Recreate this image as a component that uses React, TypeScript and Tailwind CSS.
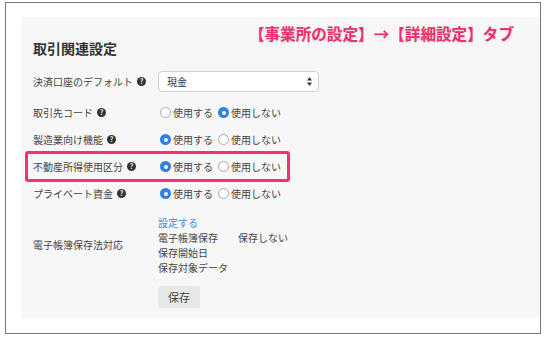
import React from "react";

const font = { fontFamily: '"Noto Sans CJK JP", "Noto Sans", sans-serif' };

function Help() {
  return (
    <span className="ml-[4px] inline-flex h-[9px] w-[9px] items-center justify-center rounded-full bg-[#333] text-[7px] font-bold leading-none text-white">
      ?
    </span>
  );
}

function Radio({ checked, label }: { checked: boolean; label: string }) {
  return (
    <span className="flex items-center">
      {checked ? (
        <span className="flex h-[11px] w-[11px] items-center justify-center rounded-full bg-[#2f7fe6]">
          <span className="h-[4px] w-[4px] rounded-full bg-white" />
        </span>
      ) : (
        <span className="h-[11px] w-[11px] rounded-full border border-[#a9a9a9] bg-white" />
      )}
      <span className="ml-[2px]">{label}</span>
    </span>
  );
}

function RadioRow({ label, first }: { label: string; first: boolean }) {
  return (
    <div className="flex h-[27px] items-center">
      <div className="flex w-[127px] items-center">
        <span>{label}</span>
        <Help />
      </div>
      <div className="flex items-center gap-[5px]">
        <Radio checked={first} label="使用する" />
        <Radio checked={!first} label="使用しない" />
      </div>
    </div>
  );
}

export default function App() {
  return (
    <div className="h-[344px] w-[550px] bg-white pl-[5px] pt-[2px]" style={font}>
      <div className="h-[332px] w-[536px] border border-[#777] bg-white pt-[14px]">
        <div className="ml-[15px] h-[301px] bg-[#f7f7f7] pl-[12px] text-[10px] leading-none text-[#444]">
          <div className="flex items-start justify-between pr-[26px] pt-[9px]">
            <div className="pt-[15px] text-[14px] font-bold text-[#333]">取引関連設定</div>
            <div
              className="text-[15.6px] font-bold text-[#f0306c]"
              style={{ textShadow: "0 1px 2px rgba(0,0,0,0.15)" }}
            >
              【事業所の設定】→【詳細設定】タブ
            </div>
          </div>
          <div className="mt-[16px] flex h-[21px] items-center">
            <div className="flex w-[125px] items-center">
              <span>決済口座のデフォルト</span>
              <Help />
            </div>
            <div className="flex h-[21px] w-[161px] items-center justify-between rounded-[4px] border border-[#d0d0d0] bg-white pl-[8px] pr-[6px]">
              <span className="text-[#333]">現金</span>
              <svg width="5" height="9" viewBox="0 0 5 9">
                <path d="M2.5 0 L5 3.5 L0 3.5 Z" fill="#333" />
                <path d="M0 5.5 L5 5.5 L2.5 9 Z" fill="#333" />
              </svg>
            </div>
          </div>
          <div className="mt-[7px]">
            <RadioRow label="取引先コード" first={false} />
            <RadioRow label="製造業向け機能" first={true} />
            <div className="relative">
              <div className="pointer-events-none absolute left-[-8px] top-[-2px] h-[31px] w-[265px] rounded-[3px] border-[3px] border-[#fa2f72]" />
              <RadioRow label="不動産所得使用区分" first={true} />
            </div>
            <RadioRow label="プライベート資金" first={true} />
          </div>
          <div className="mt-[8px] flex">
            <div className="flex h-[60px] w-[125px] items-center">電子帳簿保存法対応</div>
            <div className="flex flex-col">
              <div className="flex h-[15px] items-center text-[#3a8ad6]">設定する</div>
              <div className="flex h-[15px] items-center">
                <span className="w-[80px]">電子帳簿保存</span>
                <span>保存しない</span>
              </div>
              <div className="flex h-[15px] items-center">保存開始日</div>
              <div className="flex h-[15px] items-center">保存対象データ</div>
              <div className="mt-[11px] flex h-[22px] w-[42px] items-center justify-center rounded-[3px] bg-[#e8e8e8] text-[11px] text-[#444]">
                保存
              </div>
            </div>
          </div>
        </div>
      </div>
    </div>
  );
}
